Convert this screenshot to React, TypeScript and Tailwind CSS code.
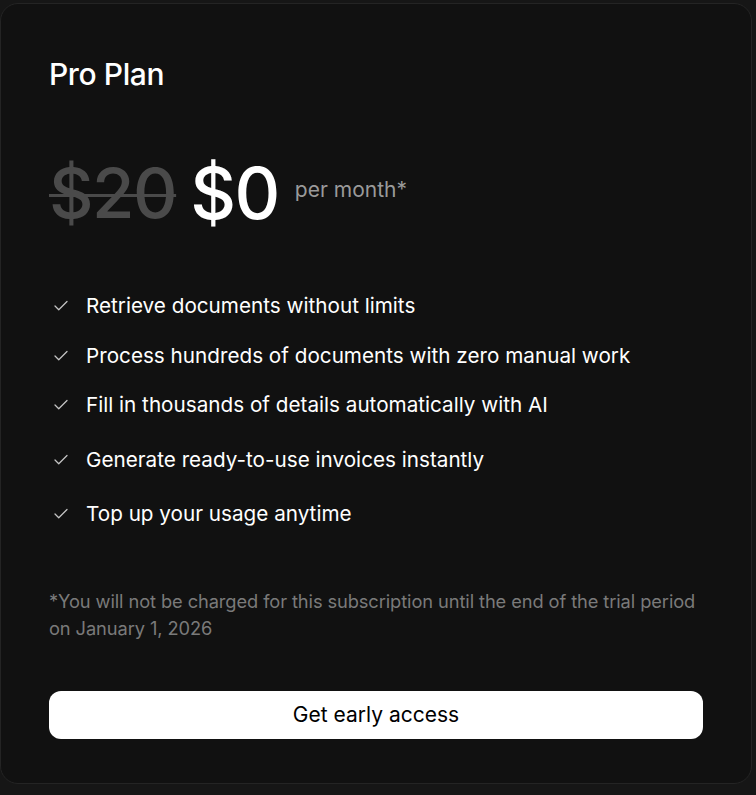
import { Check } from "lucide-react";

const FEATURES = [
  { text: "Retrieve documents without limits", gap: "mt-0" },
  { text: "Process hundreds of documents with zero manual work", gap: "mt-[26px]" },
  { text: "Fill in thousands of details automatically with AI", gap: "mt-[25px]" },
  { text: "Generate ready-to-use invoices instantly", gap: "mt-[31px]" },
  { text: "Top up your usage anytime", gap: "mt-[30px]" },
];

export default function App() {
  return (
    <div
      className="h-[795px] w-[756px] bg-[#161616] pt-[3px] pr-[4px] pb-[11px]"
      style={{ fontFamily: "Inter, 'Noto Sans', sans-serif" }}
    >
      <div className="flex h-full flex-col rounded-[18px] border border-[#242424] bg-[#111111] px-[48px] pt-[51px]">
        <h2 className="text-[30px] font-medium leading-[38px] tracking-[-0.4px] text-white">Pro Plan</h2>

        <div className="mt-[60px] flex items-center">
          <span className="text-[69px] font-medium leading-[80px] tracking-[-1.5px] text-[#4a4a4a] line-through decoration-[3px]">
            $20
          </span>
          <span className="ml-[14px] text-[71px] font-medium leading-[80px] tracking-[-1.5px] text-white">$0</span>
          <span className="ml-[16px] -mt-[6px] text-[21px] text-[#9a9a9a]">per month*</span>
        </div>

        <ul className="mt-[61px] flex flex-col">
          {FEATURES.map((f) => (
            <li key={f.text} className={`flex items-center gap-[16px] ${f.gap}`}>
              <Check className="ml-[3px] h-[18px] w-[18px] text-[#c4c4c4]" strokeWidth={1.7} />
              <span className="text-[20.7px] leading-[24px] text-white">{f.text}</span>
            </li>
          ))}
        </ul>

        <p className="mt-[62px] text-[18.3px] leading-[27px] tracking-[-0.1px] text-[#7a7a7a]">
          *You will not be charged for this subscription until the end of the trial period on January 1, 2026
        </p>

        <button className="mt-[49px] h-[48px] w-full rounded-[12px] bg-white text-[21px] text-black">
          Get early access
        </button>
      </div>
    </div>
  );
}
